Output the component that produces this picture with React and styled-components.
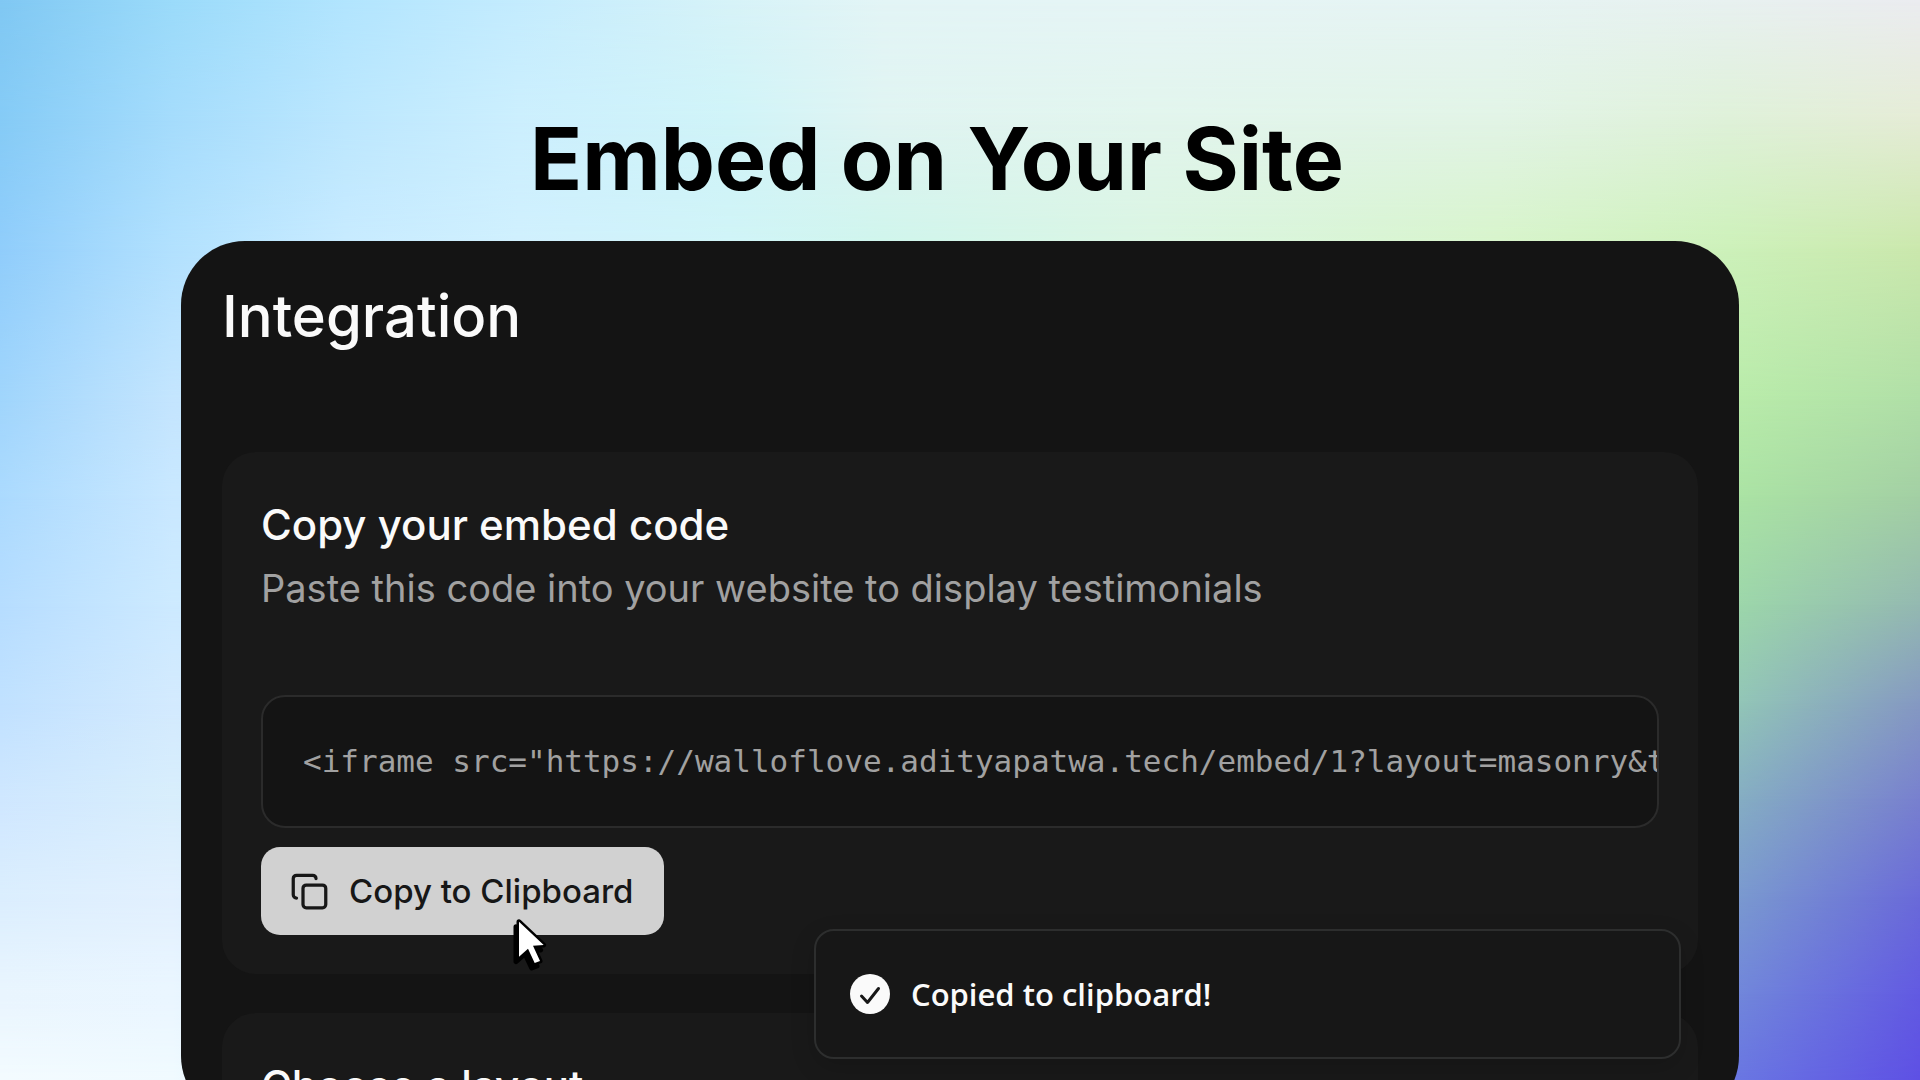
import React from 'react'
import styled, { createGlobalStyle } from 'styled-components'
import { Copy } from 'lucide-react'

const embedCode =
  '<iframe src="https://walloflove.adityapatwa.tech/embed/1?layout=masonry&theme=dark" width="100%" height="600"></iframe>'

// mesh backdrop: each row is a left-to-right gradient that fades into the next one
const xStops = [0, 9, 18, 27, 38, 46, 60, 78, 90, 100]
const meshRows = [
  { y: 0, colors: ['#80c8f3', '#9bdbfa', '#b2e5fe', '#c4ecfe', '#d7f3f8', '#e3f5f6', '#e6f5f6', '#e6f4f3', '#e8f1f0', '#ebecf0'] },
  { y: 11, colors: ['#85cbf6', '#a5dcfc', '#bce7fe', '#cceffe', '#d0f4f8', '#e0f4f2', '#e2f5ed', '#e2f4e6', '#dff1d9', '#e5ecd6'] },
  { y: 23, colors: ['#90cdfb', '#b2e1fe', '#c8ebff', '#d0f0fe', '#d0f4f7', '#cff5ec', '#daf5e2', '#d7f4ca', '#cdf1ba', '#cbe8ad'] },
  { y: 37, colors: ['#a0d5fc', '#c4e5fe', '#c8ebff', '#d0f0fe', '#d0f4f7', '#cff5ec', '#daf5e2', '#c8f0b8', '#b9ecaa', '#b0dfa7'] },
  { y: 46, colors: ['#abdafe', '#c9e8ff', '#c8ebff', '#d0f0fe', '#d0f4f7', '#cff5ec', '#daf5e2', '#b8ecb0', '#abe4a4', '#a3cfa4'] },
  { y: 56, colors: ['#b6ddff', '#cdeaff', '#c8ebff', '#d0f0fe', '#d0f4f7', '#cff5ec', '#daf5e2', '#a8e4b0', '#9dd8aa', '#94b9b1'] },
  { y: 65, colors: ['#c0e1ff', '#d3eafe', '#c8ebff', '#d0f0fe', '#d0f4f7', '#cff5ec', '#daf5e2', '#98d4b8', '#93c8b6', '#8599c2'] },
  { y: 74, colors: ['#cfe7ff', '#d8eefc', '#c8ebff', '#d0f0fe', '#d0f4f7', '#cff5ec', '#daf5e2', '#8cc0c4', '#86b0c2', '#7880cf'] },
  { y: 83, colors: ['#dbeefe', '#e2f0fe', '#c8ebff', '#d0f0fe', '#d0f4f7', '#cff5ec', '#daf5e2', '#80b0d0', '#7b9ccf', '#6a6ad9'] },
  { y: 92, colors: ['#e9f5fe', '#eaf6ff', '#c8ebff', '#d0f0fe', '#d0f4f7', '#cff5ec', '#daf5e2', '#7890d8', '#7289da', '#625ae2'] },
  { y: 100, colors: ['#f3fbff', '#f0faff', '#c8ebff', '#d0f0fe', '#d0f4f7', '#cff5ec', '#daf5e2', '#7080e0', '#6a78e2', '#5e50e4'] },
]

function App() {
  return (
    <Stage>
      <GlobalStyle />
      <Backdrop aria-hidden='true'>
        {meshRows.map((row, i) => (
          <MeshRow
            key={row.y}
            $colors={row.colors}
            $from={i ? meshRows[i - 1].y : -1}
            $to={row.y}
          />
        ))}
      </Backdrop>
      <Title>Embed on Your Site</Title>
      <Panel>
        <PanelTitle>Integration</PanelTitle>
        <Card>
          <CardTitle>Copy your embed code</CardTitle>
          <Description>
            Paste this code into your website to display testimonials
          </Description>
          <CodeBox>
            <code>{embedCode}</code>
          </CodeBox>
          <CopyButton type='button'>
            <Copy size={39} />
            Copy to Clipboard
            <Cursor />
          </CopyButton>
        </Card>
        <Card>
          <CardTitle>Choose a layout</CardTitle>
        </Card>
        <Toast role='status'>
          <CheckIcon />
          Copied to clipboard!
        </Toast>
      </Panel>
    </Stage>
  )
}

export default App

function CheckIcon() {
  return (
    <svg width='40' height='40' viewBox='0 0 40 40' aria-hidden='true'>
      <circle cx='20' cy='20' r='20' fill='#fafafa' />
      <path
        d='M11.5 22 L17.5 28.5 L28.5 14.5'
        fill='none'
        stroke='#171717'
        strokeWidth='3'
        strokeLinecap='round'
        strokeLinejoin='round'
      />
    </svg>
  )
}

const arrow = 'M6 4.7 L30.7 28 L20 28.7 L27 44 L21.7 46 L15 31.7 L6 39.7 Z'

function Cursor() {
  return (
    <Pointer viewBox='0 0 36 56' aria-hidden='true'>
      <g stroke='#000' strokeWidth='5' strokeLinejoin='round'>
        <path d={arrow} transform='translate(-3 5)' />
        <path d={arrow} />
      </g>
      <path d={arrow} fill='#fff' />
    </Pointer>
  )
}

const GlobalStyle = createGlobalStyle`
  * {
    box-sizing: border-box;
  }
  body {
    margin: 0;
  }
  h1, h2, h3, p, pre {
    margin: 0;
  }
`
const Stage = styled.main`
  position: relative;
  display: flex;
  flex-direction: column;
  height: 100vh;
  overflow: hidden;
  font-family: Inter, 'Liberation Sans', sans-serif;
`
const Backdrop = styled.div`
  position: absolute;
  inset: 0;
`
const MeshRow = styled.div`
  position: absolute;
  inset: 0;
  background: linear-gradient(
    to right,
    ${(props) => props.$colors.map((c, i) => `${c} ${xStops[i]}%`).join(', ')}
  );
  mask-image: linear-gradient(
    to bottom,
    transparent ${(props) => props.$from}%,
    #000 ${(props) => props.$to}%
  );
`
const Title = styled.h1`
  position: relative;
  padding: 109px 46px 32px 0;
  color: #000;
  font-size: 86px;
  font-weight: 700;
  line-height: 100px;
  text-align: center;
`
const Panel = styled.section`
  position: relative;
  flex: 1 1 0;
  min-height: 0;
  display: flex;
  flex-direction: column;
  gap: 39px;
  margin: 0 181px -40px;
  padding: 39px 41px 0;
  border-radius: 64px;
  background-color: #141414;
  overflow: hidden;
`
const PanelTitle = styled.h2`
  margin-bottom: 61px;
  color: #fafafa;
  font-size: 58px;
  font-weight: 500;
  line-height: 72px;
`
const Card = styled.section`
  flex: none;
  display: flex;
  flex-direction: column;
  align-items: flex-start;
  padding: 39px;
  border-radius: 34px;
  background-color: #191919;
  &:last-of-type {
    min-height: 240px;
  }
`
const CardTitle = styled.h3`
  color: #fafafa;
  font-size: 42px;
  font-weight: 500;
  line-height: 68px;
`
const Description = styled.p`
  color: #a1a1a1;
  font-size: 38px;
  line-height: 58px;
`
const CodeBox = styled.pre`
  width: 100%;
  margin: 78px 0 19px;
  padding: 38px 40px;
  border: 2px solid #2b2b2b;
  border-radius: 24px;
  background-color: #141414;
  color: #a1a1a1;
  overflow: hidden;
  font-size: 31px;
  line-height: 53px;
  code {
    font-family: 'DejaVu Sans Mono', monospace;
    font-size: 31px;
  }
`
const CopyButton = styled.button`
  position: relative;
  display: flex;
  align-items: center;
  gap: 20px;
  height: 88px;
  padding: 0 31px 0 29px;
  border: none;
  border-radius: 19px;
  background-color: #d1d1d1;
  color: #171717;
  font-family: inherit;
  font-size: 33px;
  font-weight: 500;
`
const Pointer = styled.svg`
  position: absolute;
  top: 70px;
  left: 252px;
  width: 36px;
  height: 56px;
  overflow: visible;
`
const Toast = styled.div`
  position: absolute;
  right: 58px;
  bottom: 61px;
  display: flex;
  align-items: center;
  gap: 21px;
  width: 867px;
  height: 130px;
  padding: 0 34px;
  border: 2px solid #2d2e2e;
  border-radius: 20px;
  background-color: #171717;
  color: #fafafa;
  font-family: 'Open Sans', 'Noto Sans', sans-serif;
  font-size: 31px;
  font-weight: 600;
  box-shadow: 0 8px 24px rgba(0, 0, 0, 0.15);
`
